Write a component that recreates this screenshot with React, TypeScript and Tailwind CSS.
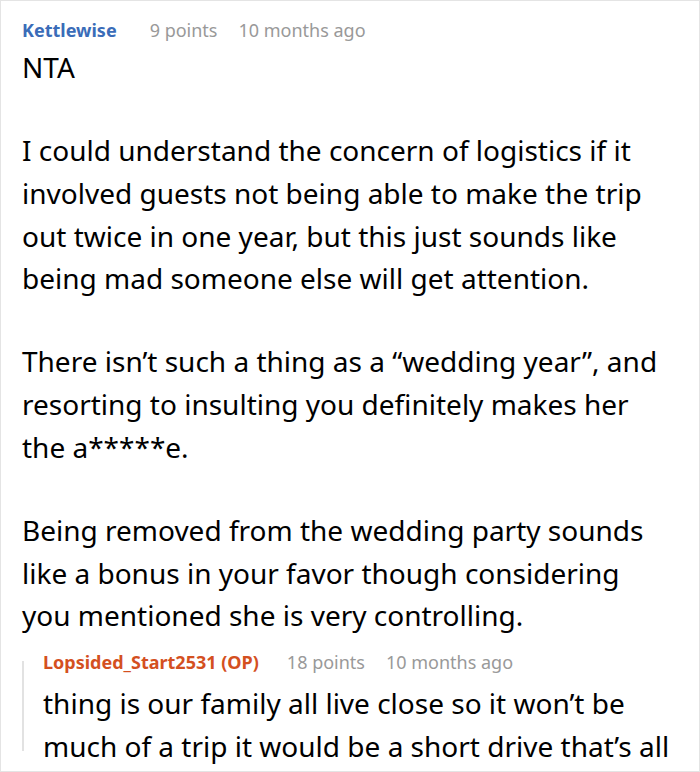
import React from "react";

const Meta = ({
  author,
  authorClass,
  points,
  pointsClass,
  age,
}: {
  author: string;
  authorClass: string;
  points: string;
  pointsClass: string;
  age: string;
}) => (
  <div className="flex items-baseline text-[18px] leading-[24px]">
    <span className={`font-bold ${authorClass}`}>{author}</span>
    <span className={`text-[#999999] ${pointsClass}`}>{points}</span>
    <span className="ml-[21px] text-[#999999]">{age}</span>
  </div>
);

export default function App() {
  return (
    <div
      className="h-[772px] w-[700px] overflow-hidden border border-[#e4e4e4] bg-white text-black [font-stretch:88%]"
      style={{ fontFamily: '"Noto Sans", "Open Sans", sans-serif' }}
    >
      <div className="w-[662px] pl-[21px] pt-[17px]">
        <Meta
          author="Kettlewise"
          authorClass="text-[#3a6cb8]"
          points="9 points"
          pointsClass="ml-[33px]"
          age="10 months ago"
        />
        <div className="mt-[4px] text-[28px] leading-[42.67px] [&>p]:mb-[40.5px] [&>p:last-child]:mb-[13px]">
          <p>NTA</p>
          <p>
            I could understand the concern of logistics if it involved guests not being
            able to make the trip out twice in one year, but this just sounds like being
            mad someone else will get attention.
          </p>
          <p>
            There isn’t such a thing as a “wedding year”, and resorting to insulting you
            definitely makes her the a*****e.
          </p>
          <p>
            Being removed from the wedding party sounds like a bonus in your favor though
            considering you mentioned she is very controlling.
          </p>
        </div>
      </div>
      <div className="flex pl-[21px]">
        <div className="mb-[16px] mt-[11px] w-[2px] shrink-0 bg-[#e2e2e2]" />
        <div className="pl-[19px]">
          <Meta
            author="Lopsided_Start2531 (OP)"
            authorClass="text-[#d4501f]"
            points="18 points"
            pointsClass="ml-[28px]"
            age="10 months ago"
          />
          <p className="mt-[8px] text-[28px] leading-[42.67px]">
            thing is our family all live close so it won’t be
            <br />
            much of a trip it would be a short drive that’s all
          </p>
        </div>
      </div>
    </div>
  );
}
